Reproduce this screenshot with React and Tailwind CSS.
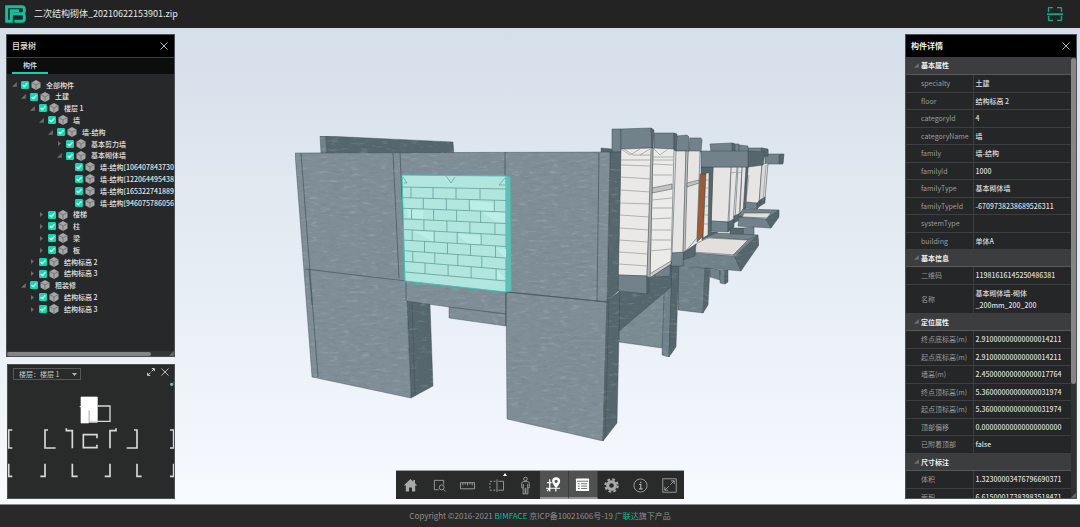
import { useState } from 'react';
import clsx from 'clsx';

const tree = [
  { depth: 0, label: '全部构件', open: true },
  { depth: 1, label: '土建', open: true },
  { depth: 2, label: '楼层 1', open: true },
  { depth: 3, label: '墙', open: true },
  { depth: 4, label: '墙-结构', open: true },
  { depth: 5, label: '基本剪力墙', open: false },
  { depth: 5, label: '基本砌体墙', open: true },
  { depth: 6, label: '墙-结构[1064078437304064]', leaf: true },
  { depth: 6, label: '墙-结构[1220644954385888]', leaf: true },
  { depth: 6, label: '墙-结构[1653227418895456]', leaf: true },
  { depth: 6, label: '墙-结构[946075786056032]', leaf: true },
  { depth: 3, label: '楼梯', open: false },
  { depth: 3, label: '柱', open: false },
  { depth: 3, label: '梁', open: false },
  { depth: 3, label: '板', open: false },
  { depth: 2, label: '结构标高 2', open: false },
  { depth: 2, label: '结构标高 3', open: false },
  { depth: 1, label: '粗装修', open: true },
  { depth: 2, label: '结构标高 2', open: false },
  { depth: 2, label: '结构标高 3', open: false },
];

const sections = [
  {
    title: '基本属性',
    rows: [
      ['specialty', '土建'],
      ['floor', '结构标高 2'],
      ['categoryId', '4'],
      ['categoryName', '墙'],
      ['family', '墙-结构'],
      ['familyId', '1000'],
      ['familyType', '基本砌体墙'],
      ['familyTypeId', '-6709738238689526311'],
      ['systemType', ''],
      ['building', '单体A'],
    ],
  },
  {
    title: '基本信息',
    rows: [
      ['二维码', '11981616145250486381'],
      ['名称', '基本砌体墙-砌体 _200mm_200_200'],
    ],
  },
  {
    title: '定位属性',
    rows: [
      ['终点底标高(m)', '2.91000000000000014211'],
      ['起点底标高(m)', '2.91000000000000014211'],
      ['墙高(m)', '2.45000000000000017764'],
      ['终点顶标高(m)', '5.36000000000000031974'],
      ['起点顶标高(m)', '5.36000000000000031974'],
      ['顶部偏移', '0.00000000000000000000'],
      ['已附着顶部', 'false'],
    ],
  },
  {
    title: '尺寸标注',
    rows: [
      ['体积', '1.32300003476796690371'],
      ['面积', '6.61500017383983518471'],
    ],
  },
];

const FRONT = '#808f97';
const MID = '#71828a';
const DARK = '#55666d';
const WHITE = '#e6e5e4';

// far to near, [fill, points]
const farFaces = [
  [MID, '765,154 783,154 783,164 765,164'],
  [DARK, '779,155 784,154 783,163 779,164'],
  [MID, '748,148 762,148 768,150 768,156 748,156'],
  [DARK, '761,148 768,149 768,156 762,156'],
  [MID, '734,144 739,144 739,153 734,153'],
  [MID, '739,145 748,146 748,153 739,153'],
  [MID, '710,144 732,143 734,144 734,152 711,152'],
  [DARK, '732,143 735,144 735,152 732,152'],
  [WHITE, '748,165 762,163 759,204 746,203'],
  ['#dad9d8', '762,164 768,163 765,200 759,204'],
  [MID, '746,202 757,203 757,209 745,208'],
  [DARK, '757,203 760,200 760,206 757,209'],
  [DARK, '760,200 765,197 765,203 760,206'],
  [DARK, '742,167 748,167 745,216 741,218'],
  [WHITE, '742,167 746,167 743,213 740,215'],
  [WHITE, '738,167 742,167 739,217 735,220'],
  [WHITE, '731,167 737,167 733,223 729,224'],
  [WHITE, '713,167 731,167 728,222 711,221'],
  [MID, '711,221 728,222 728,232 711,231'],
  [DARK, '728,222 734,219 734,227 728,232'],
  [DARK, '734,216 743,212 743,218 734,223'],
  [DARK, '701,167 713,167 711,232 718,232 702,240'],
  [MID, '701,151 749,151 749,167 701,167'],
  [DARK, '748,151 765,152 763,165 748,167'],
  [MID, '743,228 754,227 754,236 743,236'],
  [DARK, '730,228 743,228 743,236 730,235'],
  [MID, '743,209 779,210 771,217 738,216'],
  ['#dfdedc', '744,213 771,213 767,218 742,217'],
  [MID, '739,217 766,219 771,228 738,226'],
  [DARK, '766,219 779,210 779,217 771,228'],
  [MID, '707,237 716,233 758,235 748,240'],
  ['#e2dfdd', '697,243 708,238 748,240 736,255 692,252'],
];

const farColumns = [
  [MID, '678,266 705,268 703,313 678,310'],
  [DARK, '705,268 710,268 708,305 703,313'],
  [MID, '710,268 720,270 720,280 710,277'],
  [MID, '720,270 725,270 725,284 720,283'],
  [DARK, '725,270 728,270 728,282 725,284'],
  [MID, '683,252 735,256 741,271 683,266'],
  [MID, '748,240 758,235 736,259 733,255'],
  [DARK, '735,257 758,235 759,245 741,271'],
  ['#7b8c93', '619,331 672,284 669,349 619,342'],
  [DARK, '619,292 672,262 672,286 619,331'],
  [MID, '664,293 672,286 669,357 662,355'],
  [DARK, '672,262 679,262 676,347 669,357'],
];

const bays = [
  [MID, '690,138 701,138 702,140 701,152 689,152'],
  [WHITE, '688,151 700,151 697,238 684,253'],
  [MID, '677,136 687,135 689,137 689,151 676,151'],
  [WHITE, '676,151 686,151 683,253 672,253'],
  ['#c7c5c3', '686,151 688,151 685,253 683,253'],
  [MID, '672,253 684,252 683,266 671,266'],
  [DARK, '684,252 696,244 695,256 683,260'],
  [MID, '654,133 674,133 674,149 654,149'],
  [DARK, '674,133 677,134 676,151 674,150'],
  ['#ebebea', '653,148 674,149 671,264 650,277'],
  ['#c5c3c1', '652,188 672,184 672,189 652,193'],
  ['#c5c3c1', '687,183 699,180 699,183 687,187'],
  [MID, '655,274 670,265 670,276 655,277'],
  ['#d0cdcb', '648,275 671,261 671,264 648,279'],
  ['#9c5b32', '700,174 706,174 703,236 697,242'],
  [WHITE, '706,173 709,173 708,235 703,238'],
  [MID, '612,129 621,129 621,152 612,152'],
  [MID, '621,129 651,128 652,148 621,149'],
  [DARK, '651,128 654,130 653,149 652,149'],
  ['#eae9e8', '621,149 652,148 647,276 618,275'],
  ['#b4b3b2', '651,148 653,148 650,278 647,278'],
  [MID, '618,275 647,276 647,294 618,291'],
  [DARK, '647,277 649,277 649,291 647,294'],
];

const nearFaces = [
  [MID, '320,136 326,136 327,154 321,154'],
  [DARK, '326,136 453,142 454,154 327,154'],
  [DARK, '601,148 612,149 612,153 601,153'],
  [DARK, '610,152 621,152 618,291 607,302'],
  [DARK, '407,301 430,304 433,386 411,398'],
  [FRONT, '295,153 610,152 607,302 506,292 506,326 449,318 449,307 407,301 411,398 312,377'],
  [FRONT, '506,292 607,302 603,441 507,419'],
  [DARK, '607,302 620,291 617,423 603,441'],
];

const nearLines =
  'M301 153L318 377 M305 269L406 281 M393 153L399 278 M400 153L406 281V301 M505 152V176 M449 307L506 314 M506 292V326 M506 292L607 302L620 291 M599 153L597 301 M309 269L312 305 M609 302L605 438 M412 302L415 396';

function lerp(a, b, t) {
  return a + (b - a) * t;
}

function brickPath() {
  let d = '';
  for (let i = 0; i <= 8; i += 1) {
    const left = lerp(187, 272, i / 8);
    const right = lerp(189, 281, i / 8);
    d += `M${402 + i * 0.4} ${left}L506 ${right}`;
    if (i === 8) break;
    const xs = i % 2 === 0 ? [411, 433, 456, 480] : [423, 446, 469, 494];
    xs.forEach((x0) => {
      const x = x0 + i * 0.3;
      const t = (x - 402) / 104;
      d += `M${x} ${lerp(left, right, t)}V${lerp(left + 10.6, right + 11.5, t)}`;
    });
  }
  return d;
}

function Faces({ faces }) {
  return faces.map(([fill, points]) => (
    <polygon key={points} points={points} fill={fill} stroke="#3e4b51" strokeWidth="0.5" strokeLinejoin="round" />
  ));
}

function Scene() {
  return (
    <svg viewBox="0 28 1080 476" className="absolute inset-0 h-full w-full" aria-hidden="true">
      <defs>
        <filter id="concrete" x="0" y="0" width="100%" height="100%" colorInterpolationFilters="sRGB">
          <feTurbulence type="fractalNoise" baseFrequency="0.1 0.35" numOctaves="3" seed="4" result="noise" />
          <feColorMatrix in="noise" type="matrix" values="0 0 0 0 0.78  0 0 0 0 0.86  0 0 0 0 0.88  2.2 0 0 0 -1.25" result="light" />
          <feColorMatrix in="noise" type="matrix" values="0 0 0 0 0.32  0 0 0 0 0.39  0 0 0 0 0.43  0 1.2 0 0 -0.54" result="shade" />
          <feMerge result="grain">
            <feMergeNode in="SourceGraphic" />
            <feMergeNode in="shade" />
            <feMergeNode in="light" />
          </feMerge>
          <feComposite in="grain" in2="SourceGraphic" operator="in" result="cut" />
          <feComposite in="cut" in2="SourceGraphic" operator="arithmetic" k2="0.3" k3="0.7" />
        </filter>
      </defs>
      <Faces faces={farFaces} />
      <g filter="url(#concrete)">
        <Faces faces={farColumns} />
      </g>
      <Faces faces={bays} />
      <g fill="none" stroke="#8b8b8b" strokeWidth="0.6">
        <path d="M621 160L651 160 M621 165L651 166 M621 177L651 179 M621 190L650 192 M620 203L650 204 M620 215L649 217 M620 228L649 230 M619 240L648 242 M619 252L648 254 M619 264L647 266" />
        <path d="M621 149L630 155 L640 149 M624 149L633 155H651 M650 149L640 155" />
        <path d="M653 157H673 M653 160H673 M653 164L673 165 M652 175H672 M652 200L672 198 M651 208H672 M651 219L671 218 M651 230H671 M651 240H671 M650 251L671 249 M654 149L660 155L668 149 M706 180H709 M706 188H709 M705 197H709 M705 206H708 M704 215H708 M704 224H708 M731 173L737 172 M738 173L742 172 M749 175L746 203 M766 165L763 200" />
      </g>
      <g filter="url(#concrete)">
        <Faces faces={nearFaces} />
      </g>
      <path d={nearLines} fill="none" stroke="#46545a" strokeWidth="0.7" />
      <polygon points="402,175 506,176 506,292 405,281" fill="#b1e6df" stroke="#35c9bb" />
      <polygon points="506,176 510,177 511,291 506,292" fill="#64bdb4" stroke="#46cabd" strokeWidth="0.6" />
      <path
        d="M407 209l16 1v9l-15-2z M469 201l25 2v8l-22-1z M413 231l21 1v10z M457 234l24 2v9l-14-2z M480 210l25 3v10l-12-3z M496 248l10 1v10z M497 270l9 9h-9z"
        fill="#bbeee7"
      />
      <path d={brickPath()} fill="none" stroke="#619f99" strokeWidth="0.8" />
      <path d="M403 177L407 183H404 M446 176L451 183L455 177 M505 178L499 185H505" fill="none" stroke="#619f99" strokeWidth="0.7" />
    </svg>
  );
}

function Logo() {
  return (
    <svg viewBox="0 0 63 54" className="h-[18px] w-[21px]" fill="none" stroke="#18bd9e" strokeWidth="9" aria-hidden="true">
      <path d="M5 16V5H50Q58 5 58 12V19Q58 26 50 26H22" />
      <path d="M50 26Q58 26 58 33V42Q58 49 50 49H28" />
      <path d="M5 14V49H19V17H42" />
    </svg>
  );
}

function CloseIcon() {
  return (
    <svg viewBox="0 0 8 8" className="h-2 w-2" stroke="#c8c8c8" strokeWidth="0.9" aria-hidden="true">
      <path d="M0.5 0.5L7.5 7.5M7.5 0.5L0.5 7.5" />
    </svg>
  );
}

function Cube() {
  return (
    <svg viewBox="0 0 10 10" className="h-[10px] w-[10px] shrink-0" aria-hidden="true">
      <path d="M5 0L9.5 2.4V7.5L5 10L0.5 7.5V2.4Z" fill="#a5a5a5" />
      <path d="M0.8 2.6L5 5L9.2 2.6M5 5V9.8" fill="none" stroke="#6b6b6b" strokeWidth="0.8" />
    </svg>
  );
}

function Arrow({ open }) {
  return (
    <svg viewBox="0 0 5 5" className="h-[5px] w-[5px] shrink-0" aria-hidden="true">
      {open ? <path d="M4.8 0V4.8H0Z" fill="#6c6c6c" /> : <path d="M1 0L4 2.5L1 5Z" fill="#6c6c6c" />}
    </svg>
  );
}

function TreeRow({ node }) {
  const [checked, setChecked] = useState(true);
  return (
    <li className="flex min-h-0 items-center" style={{ paddingLeft: 5 + node.depth * 9 }}>
      <label className="flex items-center whitespace-nowrap">
        {node.leaf ? <span className="w-[5px]" /> : <Arrow open={node.open} />}
        <span className="relative ml-1 h-2 w-2">
          <input
            type="checkbox"
            checked={checked}
            onChange={() => setChecked(!checked)}
            className="block h-2 w-2 appearance-none rounded-[1px] border border-[#14d6b4] checked:bg-[#14d6b4]"
          />
          {checked && (
            <svg viewBox="0 0 8 8" className="pointer-events-none absolute inset-0" fill="none" stroke="#fff" strokeWidth="1.3">
              <path d="M1.7 4L3.4 5.6L6.4 2.4" />
            </svg>
          )}
        </span>
        <span className="ml-[2px] flex">
          <Cube />
        </span>
        <span className="ml-[5px]">{node.label}</span>
      </label>
    </li>
  );
}

function TreePanel() {
  return (
    <section className="flex min-h-0 flex-1 flex-col overflow-hidden border border-[#4b5052] bg-[#262829] text-[7px] font-medium text-[#e4e4e4]">
      <header className="flex h-[22px] shrink-0 items-center justify-between bg-black pr-[6px] pl-[5px]">
        <h2 className="text-[8px] font-medium">目录树</h2>
        <button aria-label="关闭目录树">
          <CloseIcon />
        </button>
      </header>
      <nav className="flex h-[17px] shrink-0 border-t border-[#3f4243] bg-[#0b0e0d] pl-[5px]">
        <button className="w-9 border-b-2 border-[#17cdad]">构件</button>
      </nav>
      <ul className="grid min-h-0 flex-1 auto-rows-fr pt-[5px] pb-9">
        {tree.map((node, i) => (
          <TreeRow key={i} node={node} />
        ))}
      </ul>
      <div className="flex h-[5px] shrink-0 items-center justify-between bg-[#333536]">
        <div className="h-1 w-[86%] rounded-full bg-[#858585]" />
        <Arrow open />
      </div>
    </section>
  );
}

function FloorMap() {
  return (
    <section className="relative ml-px h-[135px] shrink-0 overflow-hidden border border-[#4b5052] bg-[#292b2b]">
      <svg
        viewBox="24 30 498 399"
        preserveAspectRatio="xMidYMid slice"
        className="absolute inset-0 h-full w-full"
        fill="none"
        stroke="#d8d8d8"
        strokeWidth="5"
        aria-hidden="true"
      >
        <path d="M243 126H292V202H269V165H266V204H243Z" fill="#fff" stroke="#fff" strokeWidth="2" />
        <path d="M239 155H245M292 153H330V199H268" strokeWidth="4" />
        <path d="M37 225H26V279H37 M144 225H135V279H167 M199 220V227H217V280 M291 250V239H250V278H291V269 M348 220V227H330V280 M402 225H411V279H380 M510 225H521V279H510" />
        <path d="M26 326V364H37 M135 326V364H121 M217 326V364H233 M330 326V364H314 M411 326V364H425 M521 326V364H510" />
        <circle cx="515" cy="88" r="5" fill="#7fb5ae" stroke="none" />
        <path d="M519 84L524 80V87Z" fill="#15bea0" stroke="none" />
      </svg>
      <div className="relative flex items-start justify-between pt-[3px] pr-[5px] pl-[5px]">
        <div className="relative flex">
          <select
            aria-label="楼层"
            className="h-3 w-[68px] appearance-none border border-[#555858] bg-[#292b2b] pl-[5px] text-[7px] leading-[10px] text-[#c4c4c4]"
          >
            <option>楼层：楼层 1</option>
            <option>楼层：结构标高 2</option>
            <option>楼层：结构标高 3</option>
          </select>
          <svg viewBox="0 0 5 3" className="pointer-events-none absolute top-[5px] right-1 h-[3px] w-[5px]">
            <path d="M0 0H5L2.5 3Z" fill="#b5b5b5" />
          </svg>
        </div>
        <div className="flex items-center gap-[6px]">
          <button className="flex" aria-label="放大">
            <svg viewBox="0 0 8 8" className="h-2 w-2" fill="none" stroke="#d0d0d0">
              <path d="M4.8 0.6H7.4V3.2M7.2 0.8L4.6 3.4M3.2 7.4H0.6V4.8M0.8 7.2L3.4 4.6" />
            </svg>
          </button>
          <button className="flex" aria-label="关闭小地图">
            <CloseIcon />
          </button>
        </div>
      </div>
    </section>
  );
}

const tools = [
  {
    name: '主视角',
    icon: <path d="M8 1L0.8 8H3V14.5H6.4V10H9.6V14.5H13V8H15.2L12.8 5.6V2H11V4Z" fill="currentColor" stroke="none" />,
  },
  {
    name: '框选',
    icon: (
      <>
        <path d="M7 12.5H2.5V2.5H12.5V7" />
        <circle cx="10.3" cy="10" r="2.6" />
        <path d="M12.2 12L14.6 14.4" />
      </>
    ),
  },
  { name: '测量', icon: <path d="M0.5 5H15.5V11.5H0.5ZM3 5V8M5.5 5V7M8 5V8M10.5 5V7M13 5V8" /> },
  {
    name: '剖切',
    more: true,
    icon: (
      <>
        <path d="M7 3.5H1V13H7" strokeDasharray="2.2 1.6" />
        <path d="M8.5 1.5V15M10 3.5H15.5V13H10" />
      </>
    ),
  },
  {
    name: '漫游',
    icon: (
      <>
        <circle cx="8" cy="1" r="1.9" />
        <path d="M6 3.8H10Q12 3.8 12 6V10.5H10.5V17H8.4V11H7.6V17H5.5V10.5H4V6Q4 3.8 6 3.8ZM5.7 6.5V10.5M10.3 6.5V10.5" />
      </>
    ),
  },
  {
    name: '地图',
    active: true,
    icon: (
      <>
        <path d="M1 6H6M0 12H15M4 2.5V15.5M10.5 12V15.5M1 15L4 12" strokeWidth="1.3" />
        <path
          fillRule="evenodd"
          d="M10.8 0.3A4.3 4.3 0 0 1 15.1 4.6C15.1 7.4 10.8 12 10.8 12S6.5 7.4 6.5 4.6A4.3 4.3 0 0 1 10.8 0.3ZM10.8 2.9A1.7 1.7 0 1 0 10.8 6.3A1.7 1.7 0 1 0 10.8 2.9Z"
          fill="currentColor"
          stroke="none"
        />
      </>
    ),
  },
  {
    name: '属性',
    active: true,
    icon: (
      <>
        <rect x="1" y="1.5" width="14" height="13.5" rx="1" fill="currentColor" stroke="none" />
        <path d="M2 4.5H14M3 7.2H5M6.5 7.2H13M3 9.7H5M6.5 9.7H13M3 12.2H5M6.5 12.2H13" stroke="#4f5251" />
      </>
    ),
  },
  {
    name: '设置',
    icon: (
      <>
        <circle cx="8" cy="8" r="4.1" strokeWidth="3.2" />
        <circle cx="8" cy="8" r="6.6" strokeWidth="2.2" strokeDasharray="2.9 2.28" />
      </>
    ),
  },
  {
    name: '信息',
    icon: (
      <>
        <circle cx="8" cy="8" r="7" />
        <path d="M6.5 6.8H8.3V11.5M6.3 11.7H10.2M8.2 4V5.3" strokeWidth="1.3" />
      </>
    ),
  },
  {
    name: '全屏',
    icon: <path d="M0.8 0.8H15.2V15.2H0.8ZM9.5 3H13V6.5M13 3L8.8 7.2M3 9.5V13H6.5M3 13L7.2 8.8" />,
  },
];

function Toolbar() {
  return (
    <div className="relative grid h-[29px] w-[288px] grid-cols-10 border-t border-[#9b9fa1] bg-[#292b2b] text-[#a9a9a9]">
      {tools.map((tool) => (
        <button
          key={tool.name}
          aria-label={tool.name}
          className={clsx(
            'relative flex items-center justify-center',
            tool.active && 'border-r border-b-2 border-r-[#3a3c3c] border-b-[#8e9090] bg-[#4f5251] text-white'
          )}
        >
          <svg viewBox="0 0 16 16" className="h-[15px] w-[15px] overflow-visible" fill="none" stroke="currentColor" strokeWidth="0.9">
            {tool.icon}
          </svg>
          {tool.more && (
            <svg viewBox="0 0 4 3" className="absolute top-[2px] right-1 h-[3px] w-1">
              <path d="M0 3L2 0L4 3Z" fill="#fff" />
            </svg>
          )}
        </button>
      ))}
    </div>
  );
}

function DetailPanel() {
  return (
    <section className="flex w-[172px] shrink-0 flex-col overflow-hidden border border-[#4b5052] bg-[#242627] text-[7px]">
      <header className="flex h-[22px] shrink-0 items-center justify-between bg-black pr-[6px] pl-[5px]">
        <h2 className="text-[8px] font-bold text-[#eee]">构件详情</h2>
        <button aria-label="关闭构件详情">
          <CloseIcon />
        </button>
      </header>
      <div className="flex min-h-0 flex-1">
        <div className="min-w-0 flex-1 overflow-hidden">
          <table className="w-full table-fixed border-collapse text-left">
            <colgroup>
              <col className="w-[67px]" />
              <col />
            </colgroup>
            {sections.map((section) => (
              <tbody key={section.title}>
                <tr className="h-[17px] bg-[#3b3d3e]">
                  <th colSpan={2} className="border-b border-[#565959] p-0 pl-2 leading-3 text-[#f0f0f0]">
                    <span className="flex items-center gap-[2px]">
                      <Arrow open />
                      {section.title}
                    </span>
                  </th>
                </tr>
                {section.rows.map(([key, value]) => (
                  <tr key={key} className="h-[17px] even:h-[18px]">
                    <th className="truncate border-r border-b border-[#3c3f3e] p-0 pl-[15px] leading-3 font-normal text-[#9b9d9d]">
                      {key}
                    </th>
                    <td className="border-b border-[#3c3f3e] px-[2px] py-[2px] leading-3 font-medium text-[#dedede]">{value}</td>
                  </tr>
                ))}
              </tbody>
            ))}
          </table>
        </div>
        <div className="flex w-[5px] shrink-0 flex-col justify-between bg-[#303232] pt-px">
          <div className="h-[74%] rounded-full bg-[#858585]" />
          <Arrow open />
        </div>
      </div>
    </section>
  );
}

export default function App() {
  return (
    <div className="flex h-screen flex-col overflow-hidden bg-[#292929] font-['Noto_Sans_CJK_SC',sans-serif]">
      <header className="flex h-7 shrink-0 items-center justify-between bg-[#232323] pr-[17px] pl-[5px]">
        <div className="flex items-center gap-2">
          <Logo />
          <h1 className="text-[9px] text-[#e8e8e8]">二次结构砌体_20210622153901.zip</h1>
        </div>
        <button aria-label="扫描">
          <svg viewBox="0 0 16 14" className="h-[14px] w-4" fill="none" stroke="#12a88d" strokeWidth="1.3">
            <path d="M1.5 5V1.2Q1.5 0.6 2.1 0.6H6M10 0.6H14Q14.5 0.6 14.5 1.2V5M1.5 9V12.8Q1.5 13.4 2.1 13.4H6M10 13.4H14Q14.5 13.4 14.5 12.8V9" />
            <path d="M0 7.2H16" strokeWidth="1.8" />
          </svg>
        </button>
      </header>
      <main className="relative min-h-0 flex-1 bg-linear-to-b from-[#d5dfe9] to-[#f7faff]">
        <Scene />
        <div className="relative flex h-full justify-between pt-[6px] pr-[3px] pb-[5px] pl-[6px]">
          <div className="flex w-[169px] shrink-0 flex-col gap-[7px]">
            <TreePanel />
            <FloorMap />
          </div>
          <div className="flex items-end">
            <Toolbar />
          </div>
          <DetailPanel />
        </div>
      </main>
      <footer className="flex h-[23px] shrink-0 items-center justify-center border-t border-[#8a8d8e] text-[8px] text-[#8f8f8f]">
        <p>
          Copyright ©2016-2021{' '}
          <a href="#bimface" className="text-[#14b89a]">
            BIMFACE
          </a>{' '}
          京ICP备10021606号-19{' '}
          <a href="#glodon" className="text-[#14b89a]">
            广联达
          </a>
          旗下产品
        </p>
      </footer>
    </div>
  );
}
